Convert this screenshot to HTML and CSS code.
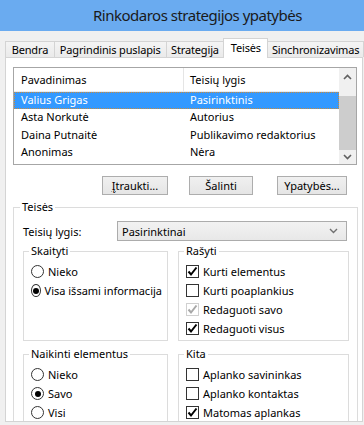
FILE: index.html
```html
<!DOCTYPE html>
<html lang="lt">

<head>
    <meta charset="UTF-8">
    <meta name="viewport" content="width=device-width, initial-scale=1.0">
    <title>Rinkodaros strategijos ypatybės</title>
    <link rel="stylesheet" href="styles.css">
</head>

<body>
    <div class="titlebar">Rinkodaros strategijos ypatybės</div>

    <div class="dialog">
        <div class="tabs">
            <div class="tab tab-general">Bendra</div>
            <div class="tab tab-home">Pagrindinis puslapis</div>
            <div class="tab tab-strategy">Strategija</div>
            <div class="tab tab-rights tab-active">Teisės</div>
            <div class="tab tab-sync">Sinchronizavimas</div>
        </div>

        <div class="panel">
            <div class="listbox">
                <div class="list">
                    <div class="list-header">
                        <div class="col-name">Pavadinimas</div>
                        <div class="col-level">Teisių lygis</div>
                    </div>
                    <div class="list-row selected">
                        <div class="col-name">Valius Grigas</div>
                        <div class="col-level">Pasirinktinis</div>
                    </div>
                    <div class="list-row">
                        <div class="col-name">Asta Norkutė</div>
                        <div class="col-level">Autorius</div>
                    </div>
                    <div class="list-row">
                        <div class="col-name">Daina Putnaitė</div>
                        <div class="col-level">Publikavimo redaktorius</div>
                    </div>
                    <div class="list-row">
                        <div class="col-name">Anonimas</div>
                        <div class="col-level">Nėra</div>
                    </div>
                </div>
                <div class="scrollbar">
                    <div class="arrow arrow-up">
                        <svg width="9" height="6" viewBox="0 0 9 6"><polyline points="1,5 4.5,1.5 8,5" fill="none" stroke="#606060" stroke-width="1.6"/></svg>
                    </div>
                    <div class="track"><div class="thumb"></div></div>
                    <div class="arrow arrow-down">
                        <svg width="9" height="6" viewBox="0 0 9 6"><polyline points="1,1 4.5,4.5 8,1" fill="none" stroke="#606060" stroke-width="1.6"/></svg>
                    </div>
                </div>
            </div>

            <div class="buttons">
                <button class="btn btn-add"><u>Į</u>traukti...</button>
                <button class="btn btn-remove">Šalinti</button>
                <button class="btn btn-props">Ypatybės...</button>
            </div>

            <fieldset class="group">
                <legend>Teisės</legend>
                <div class="level-row">
                    <span class="level-label">Teisių lygis:</span>
                    <div class="select">
                        <span>Pasirinktinai</span>
                        <svg width="9" height="6" viewBox="0 0 9 6"><polyline points="1,1 4.5,4.5 8,1" fill="none" stroke="#707070" stroke-width="1.4"/></svg>
                    </div>
                </div>

                <div class="group-row">
                    <fieldset class="sub sub-left">
                        <legend>Skaityti</legend>
                        <div class="option"><span class="radio"></span>Nieko</div>
                        <div class="option"><span class="radio on"></span>Visa išsami informacija</div>
                    </fieldset>
                    <fieldset class="sub sub-right">
                        <legend>Rašyti</legend>
                        <div class="option"><span class="check"><svg width="11" height="11" viewBox="0 0 11 11"><polyline points="1.5,5.5 4,8.5 9.5,1.5" fill="none" stroke="#000" stroke-width="2"/></svg></span>Kurti elementus</div>
                        <div class="option"><span class="check"></span>Kurti poaplankius</div>
                        <div class="option"><span class="check disabled"><svg width="11" height="11" viewBox="0 0 11 11"><polyline points="1.5,5.5 4,8.5 9.5,1.5" fill="none" stroke="#a8a8a8" stroke-width="2"/></svg></span>Redaguoti savo</div>
                        <div class="option"><span class="check"><svg width="11" height="11" viewBox="0 0 11 11"><polyline points="1.5,5.5 4,8.5 9.5,1.5" fill="none" stroke="#000" stroke-width="2"/></svg></span>Redaguoti visus</div>
                    </fieldset>
                </div>

                <div class="group-row group-row-second">
                    <fieldset class="sub sub-left">
                        <legend>Naikinti elementus</legend>
                        <div class="option"><span class="radio"></span>Nieko</div>
                        <div class="option"><span class="radio on"></span>Savo</div>
                        <div class="option"><span class="radio"></span>Visi</div>
                    </fieldset>
                    <fieldset class="sub sub-right">
                        <legend>Kita</legend>
                        <div class="option"><span class="check"></span>Aplanko savininkas</div>
                        <div class="option"><span class="check"></span>Aplanko kontaktas</div>
                        <div class="option"><span class="check"><svg width="11" height="11" viewBox="0 0 11 11"><polyline points="1.5,5.5 4,8.5 9.5,1.5" fill="none" stroke="#000" stroke-width="2"/></svg></span>Matomas aplankas</div>
                    </fieldset>
                </div>
            </fieldset>
        </div>
    </div>
</body>

</html>
```

FILE: styles.css
```css
* {
    box-sizing: border-box;
}

body {
    margin: 0;
    width: 364px;
    height: 425px;
    overflow: hidden;
    background-color: #f0f0f0;
    font-family: "Noto Sans", sans-serif;
    font-size: 11px;
    color: #000000;
}

.titlebar {
    height: 31px;
    padding-left: 93px;
    background: #6aabf0;
    color: #1a1a1a;
    font-size: 15px;
    letter-spacing: -0.5px;
    line-height: 30px;
    white-space: nowrap;
}

.dialog {
    padding: 7px 1px 0 5px;
}

/* tab strip */
.tabs {
    display: flex;
    align-items: flex-end;
    height: 19px;
}

.tab {
    height: 16px;
    padding-top: 1px;
    line-height: 14px;
    text-align: center;
    border: 1px solid #d4d4d4;
    border-bottom: none;
    margin-right: -1px;
    background: linear-gradient(#f4f4f4, #eaeaea);
    white-space: nowrap;
    letter-spacing: -0.15px;
}

.tab-general {
    width: 50px;
}

.tab-home {
    width: 113px;
}

.tab-strategy {
    width: 59px;
}

.tab-rights {
    width: 45px;
}

.tab-sync {
    width: 97px;
}

.tab-active {
    position: relative;
    z-index: 1;
    height: 20px;
    margin-bottom: -1px;
    padding-top: 2px;
    background: #ffffff;
}

.panel {
    width: 358px;
    height: 365px;
    padding: 9px 0 0 7px;
    border: 1px solid #d4d4d4;
    background: #ffffff;
    overflow: hidden;
}

/* user list */
.listbox {
    display: flex;
    width: 344px;
    height: 98px;
    border: 1px solid #a6a6a6;
    overflow: hidden;
}

.list {
    flex: 1;
}

.list-header {
    display: flex;
    height: 24px;
    line-height: 23px;
    border-bottom: 1px solid #eaeaea;
}

.list-header .col-name {
    border-right: 1px solid #e5e5e5;
}

.col-name {
    width: 170px;
    padding-left: 7px;
}

.col-level {
    padding-left: 6px;
}

.list-row {
    display: flex;
    height: 17.3px;
    line-height: 16px;
}

.list-row.selected {
    background: #3399ff;
    color: #ffffff;
    outline: 1px dotted #c98a3c;
    outline-offset: -1px;
}

.scrollbar {
    display: flex;
    flex-direction: column;
    width: 17px;
    background: #f0f0f0;
}

.arrow {
    display: flex;
    justify-content: center;
    align-items: center;
}

.arrow-up {
    height: 18px;
}

.arrow-down {
    height: 14px;
}

.track {
    flex: 1;
    display: flex;
    flex-direction: column;
    justify-content: flex-end;
}

.thumb {
    height: 54px;
    background: #cdcdcd;
}

/* buttons */
.buttons {
    display: flex;
    margin-top: 11px;
    padding-left: 89px;
}

.btn {
    height: 19px;
    padding: 0;
    border: 1px solid #adadad;
    background: linear-gradient(#f0f0f0, #e5e5e5);
    font-family: inherit;
    font-size: 11px;
    color: #000000;
}

.btn-add {
    width: 66px;
}

.btn-remove {
    width: 64px;
    margin-left: 21px;
}

.btn-props {
    width: 70px;
    margin-left: 24px;
}

/* group boxes */
fieldset {
    margin: 0;
    min-width: 0;
    border: 1px solid #dcdcdc;
}

legend {
    padding: 0 2px;
    line-height: 16px;
}

.group {
    width: 345px;
    margin-top: 4px;
    padding: 0 8px 0 9px;
}

.group > legend {
    margin-left: -3px;
}

.level-row {
    display: flex;
    align-items: center;
    margin-top: 6px;
    height: 20px;
}

.level-label {
    width: 94px;
}

.select {
    display: flex;
    justify-content: space-between;
    align-items: center;
    width: 230px;
    height: 20px;
    padding: 0 8px 0 4px;
    border: 1px solid #acacac;
    background: linear-gradient(#f2f2f2, #e8e8e8);
}

.group-row {
    display: flex;
    gap: 10px;
    margin-top: 2px;
}

.group-row-second {
    margin-top: 5px;
}

.sub {
    padding: 3px 5px 2px;
}

.sub-left {
    width: 145px;
}

.sub-right {
    width: 171px;
}

.option {
    display: flex;
    align-items: center;
    gap: 4px;
    height: 19px;
    padding-left: 2px;
    white-space: nowrap;
}

.radio {
    display: flex;
    justify-content: center;
    align-items: center;
    width: 13px;
    height: 13px;
    border: 1px solid #333333;
    border-radius: 50%;
    background: #ffffff;
}

.radio.on::after {
    content: "";
    width: 6px;
    height: 6px;
    border-radius: 50%;
    background: #000000;
}

.check {
    display: flex;
    justify-content: center;
    align-items: center;
    width: 13px;
    height: 13px;
    border: 1px solid #333333;
    background: #ffffff;
}

.check.disabled {
    border-color: #d0d0d0;
}
```
